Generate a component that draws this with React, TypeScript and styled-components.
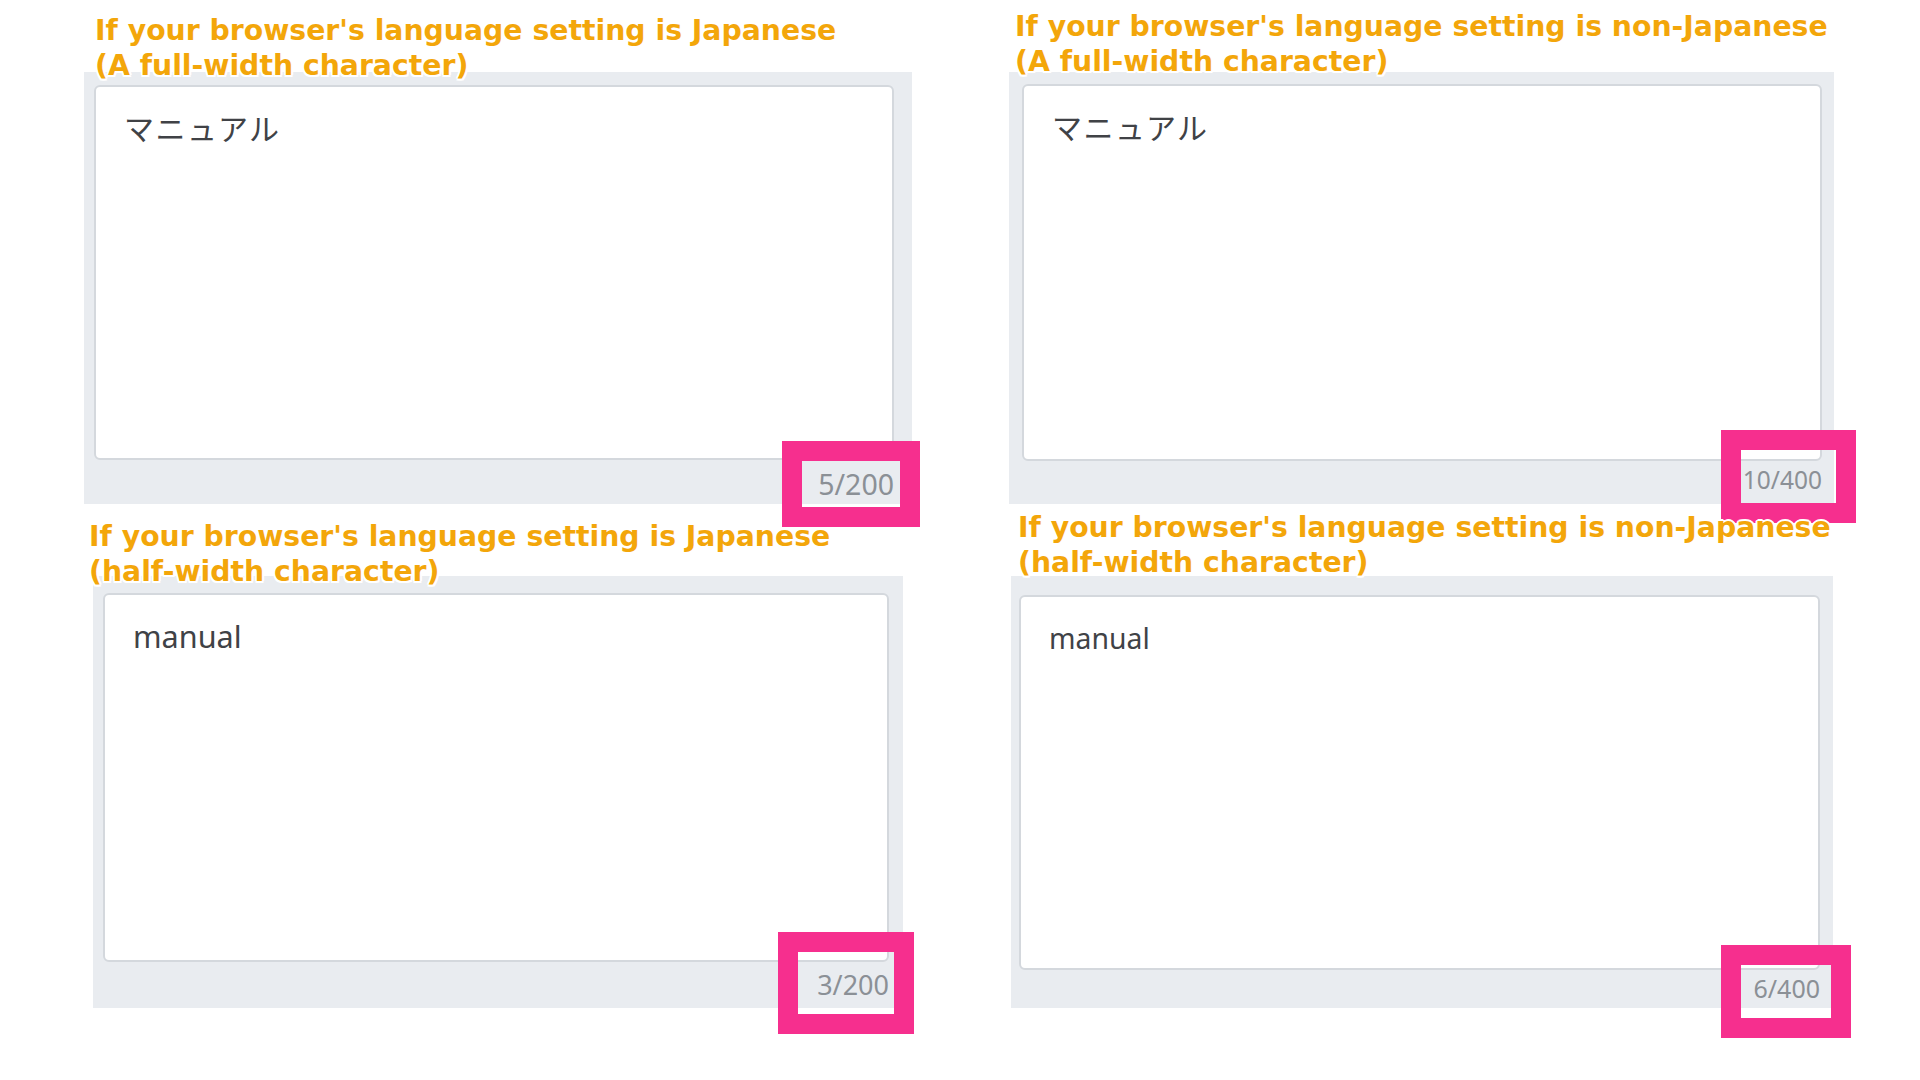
import React from "react";
import styled, { createGlobalStyle } from "styled-components";

const GlobalStyle = createGlobalStyle`
  html, body { margin: 0; padding: 0; background: #ffffff; }
  body { font-family: "Noto Sans", "Noto Sans CJK JP", sans-serif; }
  * { box-sizing: border-box; }
`;

type Layout = {
  panelX: number;
  titleDx: number;
  titleY: number;
  overlap: number;
  panelW: number;
  pl: number;
  pr: number;
  pt: number;
  boxH: number;
  textSize: number;
  counterSize: number;
  counterPad: number;
  frame: { right: number; bottom: number; w: number; h: number };
};

type Figure = {
  title: [string, string];
  text: string;
  lang: "ja" | "en";
  count: string;
  layout: Layout;
};

const figures: Figure[] = [
  {
    title: ["If your browser's language setting is Japanese", "(A full-width character)"],
    text: "マニュアル",
    lang: "ja",
    count: "5/200",
    layout: {
      panelX: 84, titleDx: 11, titleY: 13, overlap: 11, panelW: 828,
      pl: 10, pr: 18, pt: 13, boxH: 375, textSize: 30, counterSize: 28.5, counterPad: 6,
      frame: { right: -8, bottom: -23, w: 138, h: 86 },
    },
  },
  {
    title: ["If your browser's language setting is non-Japanese", "(A full-width character)"],
    text: "マニュアル",
    lang: "ja",
    count: "10/400",
    layout: {
      panelX: 49, titleDx: 6, titleY: 9, overlap: 7, panelW: 825,
      pl: 13, pr: 12, pt: 12, boxH: 377, textSize: 30, counterSize: 24.5, counterPad: 10,
      frame: { right: -22, bottom: -19, w: 135, h: 93 },
    },
  },
  {
    title: ["If your browser's language setting is Japanese", "(half-width character)"],
    text: "manual",
    lang: "en",
    count: "3/200",
    layout: {
      panelX: 93, titleDx: -4, titleY: 9, overlap: 13, panelW: 810,
      pl: 10, pr: 14, pt: 17, boxH: 369, textSize: 30.6, counterSize: 27, counterPad: 9,
      frame: { right: -11, bottom: -26, w: 136, h: 102 },
    },
  },
  {
    title: ["If your browser's language setting is non-Japanese", "(half-width character)"],
    text: "manual",
    lang: "en",
    count: "6/400",
    layout: {
      panelX: 51, titleDx: 7, titleY: 0, overlap: 4, panelW: 822,
      pl: 8, pr: 13, pt: 19, boxH: 375, textSize: 28.4, counterSize: 25, counterPad: 6,
      frame: { right: -18, bottom: -30, w: 130, h: 93 },
    },
  },
];

const Page = styled.div`
  width: 1920px;
  height: 1080px;
  overflow: hidden;
  display: grid;
  grid-template-columns: 960px 960px;
  grid-template-rows: 510px 570px;
`;

const Cell = styled.section<{ $x: number; $y: number }>`
  display: flex;
  flex-direction: column;
  align-items: flex-start;
  padding-left: ${(p) => p.$x}px;
  padding-top: ${(p) => p.$y}px;
`;

const Title = styled.h2<{ $dx: number; $overlap: number }>`
  position: relative;
  z-index: 2;
  margin: 0 0 ${(p) => -p.$overlap}px ${(p) => p.$dx}px;
  font-family: "DejaVu Sans", Verdana, sans-serif;
  font-weight: bold;
  font-size: 28.3px;
  line-height: 35px;
  color: #f3a60a;
  white-space: nowrap;
  text-shadow: 2px 0 #fff, -2px 0 #fff, 0 2px #fff, 0 -2px #fff,
    1.5px 1.5px #fff, -1.5px 1.5px #fff, 1.5px -1.5px #fff, -1.5px -1.5px #fff;
`;

const TitleLine = styled.span`
  display: block;
`;

const Panel = styled.div<{ $w: number; $pl: number; $pr: number; $pt: number }>`
  position: relative;
  width: ${(p) => p.$w}px;
  height: 432px;
  background: #e9ecf0;
  padding: ${(p) => p.$pt}px ${(p) => p.$pr}px 0 ${(p) => p.$pl}px;
  display: flex;
  flex-direction: column;
`;

const TextBox = styled.div<{ $h: number; $size: number; $wide: boolean }>`
  width: 100%;
  height: ${(p) => p.$h}px;
  flex: none;
  background: #ffffff;
  border: 2px solid #d4d8dd;
  border-radius: 6px;
  padding: 19px 28px;
  font-family: "Noto Sans", "Noto Sans CJK JP", sans-serif;
  font-size: ${(p) => p.$size}px;
  letter-spacing: ${(p) => (p.$wide ? "1.5px" : "0")};
  line-height: 45px;
  color: #404246;
`;

const Counter = styled.div<{ $pb: number; $size: number }>`
  flex: 1;
  display: flex;
  align-items: flex-end;
  justify-content: flex-end;
  padding-bottom: ${(p) => p.$pb}px;
  font-family: "Noto Sans", sans-serif;
  font-size: ${(p) => p.$size}px;
  line-height: 28px;
  color: #8b9096;
`;

const Frame = styled.div<{ $r: number; $b: number; $w: number; $h: number }>`
  position: absolute;
  z-index: 1;
  right: ${(p) => p.$r}px;
  bottom: ${(p) => p.$b}px;
  width: ${(p) => p.$w}px;
  height: ${(p) => p.$h}px;
  border: 20px solid #f62f8e;
  pointer-events: none;
`;

export default function App() {
  return (
    <>
      <GlobalStyle />
      <Page>
        {figures.map((f, i) => {
          const l = f.layout;
          return (
            <Cell key={i} $x={l.panelX} $y={l.titleY}>
              <Title $dx={l.titleDx} $overlap={l.overlap}>
                <TitleLine>{f.title[0]}</TitleLine>
                <TitleLine>{f.title[1]}</TitleLine>
              </Title>
              <Panel $w={l.panelW} $pl={l.pl} $pr={l.pr} $pt={l.pt}>
                <TextBox $h={l.boxH} $size={l.textSize} $wide={f.lang === "ja"} lang={f.lang}>
                  {f.text}
                </TextBox>
                <Counter $pb={l.counterPad} $size={l.counterSize}>{f.count}</Counter>
                <Frame $r={l.frame.right} $b={l.frame.bottom} $w={l.frame.w} $h={l.frame.h} />
              </Panel>
            </Cell>
          );
        })}
      </Page>
    </>
  );
}
